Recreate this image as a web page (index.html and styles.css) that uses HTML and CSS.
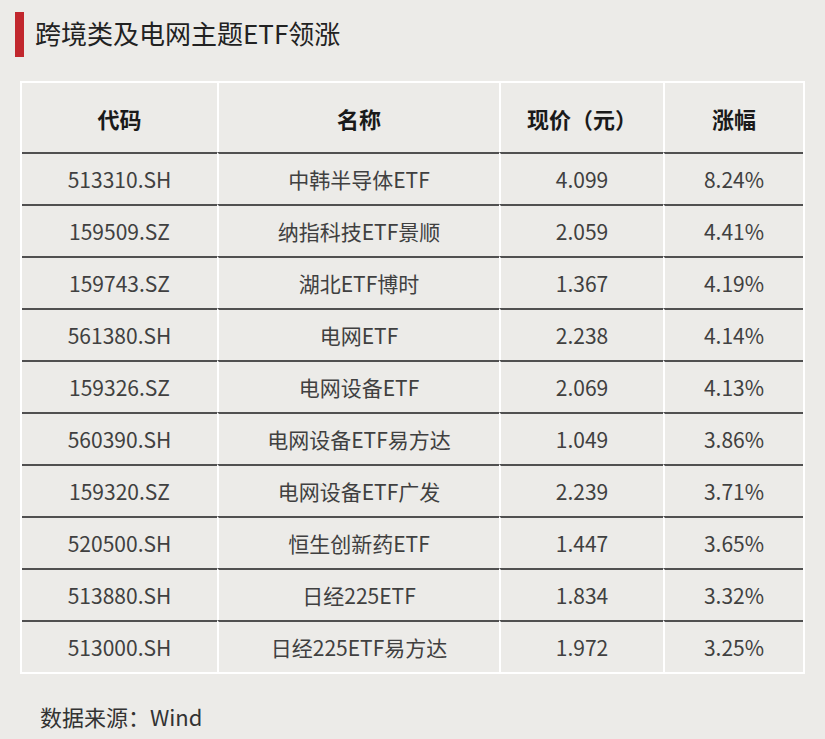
FILE: index.html
```html
<!DOCTYPE html>
<html lang="zh-CN">
<head>
<meta charset="utf-8">
<title>跨境类及电网主题ETF领涨</title>
<link rel="stylesheet" href="styles.css">
</head>
<body>
<div class="page">
  <div class="title">
    <span class="bar"></span>
    <h1 class="title-text">跨境类及电网主题ETF领涨</h1>
  </div>
  <table class="etf">
    <colgroup>
      <col class="c1"><col class="c2"><col class="c3"><col class="c4">
    </colgroup>
    <thead>
      <tr><th>代码</th><th>名称</th><th>现价（元）</th><th>涨幅</th></tr>
    </thead>
    <tbody>
      <tr><td>513310.SH</td><td>中韩半导体ETF</td><td>4.099</td><td>8.24%</td></tr>
      <tr><td>159509.SZ</td><td>纳指科技ETF景顺</td><td>2.059</td><td>4.41%</td></tr>
      <tr><td>159743.SZ</td><td>湖北ETF博时</td><td>1.367</td><td>4.19%</td></tr>
      <tr><td>561380.SH</td><td>电网ETF</td><td>2.238</td><td>4.14%</td></tr>
      <tr><td>159326.SZ</td><td>电网设备ETF</td><td>2.069</td><td>4.13%</td></tr>
      <tr><td>560390.SH</td><td>电网设备ETF易方达</td><td>1.049</td><td>3.86%</td></tr>
      <tr><td>159320.SZ</td><td>电网设备ETF广发</td><td>2.239</td><td>3.71%</td></tr>
      <tr><td>520500.SH</td><td>恒生创新药ETF</td><td>1.447</td><td>3.65%</td></tr>
      <tr><td>513880.SH</td><td>日经225ETF</td><td>1.834</td><td>3.32%</td></tr>
      <tr><td>513000.SH</td><td>日经225ETF易方达</td><td>1.972</td><td>3.25%</td></tr>
    </tbody>
  </table>
  <p class="source">数据来源：Wind</p>
</div>
</body>
</html>
```
FILE: styles.css
```css
html, body {
  margin: 0;
  padding: 0;
  background: #ecebe8;
}
body {
  font-family: "Noto Sans CJK SC", "Noto Sans", sans-serif;
  color: #3a3a3a;
  width: 825px;
  height: 739px;
  overflow: hidden;
}
.page {
  padding-top: 12px;
}
.title {
  display: flex;
  align-items: center;
  gap: 11px;
  padding-left: 15px;
  height: 45px;
}
.bar {
  width: 9px;
  height: 45px;
  background: #c1272d;
}
.title-text {
  margin: 0;
  font-size: 26px;
  font-weight: 400;
  color: #222;
  line-height: 1;
  margin-top: -4px;
}
.etf {
  margin: 24px 0 0 20px;
  width: 785px;
  table-layout: fixed;
  border-collapse: separate;
  border-spacing: 0;
  border: 2px solid #fff;
}
.c1 { width: 195px; }
.c2 { width: 282px; }
.c3 { width: 164px; }
.c4 { width: 140px; }
.etf th, .etf td {
  padding: 0;
  text-align: center;
  vertical-align: middle;
}
.etf th + th, .etf td + td {
  border-left: 2px solid #fff;
}
.etf th {
  height: 69px;
  font-size: 22px;
  font-weight: 700;
  color: #1a1a1a;
}
.etf td {
  height: 50px;
  font-size: 21px;
  font-weight: 400;
  border-top: 2px solid #505050;
  color: #404040;
}
.source {
  margin: 27px 0 0 40px;
  font-size: 22px;
  line-height: 30px;
  color: #333;
}
```
